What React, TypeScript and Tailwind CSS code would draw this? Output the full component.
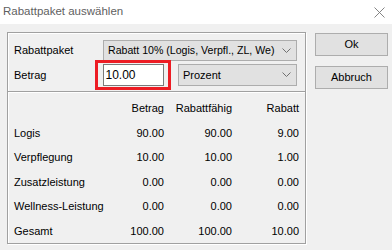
import React from "react";

const Chevron = () => (
  <svg width="9" height="6" viewBox="0 0 9 6" className="shrink-0">
    <polyline points="0.5,0.5 4.5,4.5 8.5,0.5" fill="none" stroke="#707070" strokeWidth="1" />
  </svg>
);

const rows = [
  ["Logis", "90.00", "90.00", "9.00"],
  ["Verpflegung", "10.00", "10.00", "1.00"],
  ["Zusatzleistung", "0.00", "0.00", "0.00"],
  ["Wellness-Leistung", "0.00", "0.00", "0.00"],
  ["Gesamt", "100.00", "100.00", "10.00"],
];

export default function App() {
  return (
    <div
      className="w-[392px] h-[250px] bg-[#f0f0f0] flex flex-col overflow-hidden text-black"
      style={{ fontFamily: '"Liberation Sans", Arial, sans-serif', fontSize: "11px" }}
    >
      {/* Title bar */}
      <div className="h-[24px] bg-white flex items-center justify-between pl-[3px] pr-[5px] shrink-0">
        <span className="text-[11.5px] text-[#5f5f5f] leading-none">Rabattpaket auswählen</span>
        <svg width="11" height="11" viewBox="0 0 11 11" className="mr-[2px]">
          <line x1="0.5" y1="0.5" x2="10.5" y2="10.5" stroke="#777" strokeWidth="0.9" />
          <line x1="10.5" y1="0.5" x2="0.5" y2="10.5" stroke="#777" strokeWidth="0.9" />
        </svg>
      </div>

      {/* Body */}
      <div className="flex pt-[8px]">
        {/* Group box */}
        <div className="ml-[7px] w-[299px] h-[212px] border border-[#a0a0a0] shadow-[inset_1px_1px_0_#fff,1px_1px_0_#fff] flex flex-col">
          {/* Row 1 */}
          <div className="flex items-center mt-[7px] h-[21px]">
            <span className="ml-[6px] w-[89px]">Rabattpaket</span>
            <div className="w-[194px] h-[21px] bg-[#e1e1e1] border border-[#adadad] flex items-center justify-between pl-[4px] pr-[5px]">
              <span className="whitespace-nowrap text-[10.6px]">Rabatt 10% (Logis, Verpfl., ZL, We)</span>
              <Chevron />
            </div>
          </div>
          {/* Row 2 */}
          <div className="flex items-center h-[30px] mt-[-1px]">
            <span className="ml-[6px] w-[81px]">Betrag</span>
            <div className="w-[76px] h-[30px] border-[3px] border-[#ed1c24] flex items-center justify-center">
              <div className="w-[61px] h-[22px] bg-white border border-[#7a7a7a] flex items-center pl-[2px] text-[12px]">
                10.00
              </div>
            </div>
            <div className="ml-[7px] w-[119px] h-[22px] bg-[#e1e1e1] border border-[#adadad] flex items-center justify-between pl-[4px] pr-[5px]">
              <span>Prozent</span>
              <Chevron />
            </div>
          </div>
          {/* Separator */}
          <div className="mt-[1px] h-[2px] border-t border-[#a0a0a0] bg-white shrink-0" />
          {/* Table */}
          <div className="grid grid-cols-[96px_54px_68px_67px] auto-rows-[24.5px] items-center ml-[6px] mt-[3px]">
            <span />
            <span className="text-right">Betrag</span>
            <span className="text-right">Rabattfähig</span>
            <span className="text-right">Rabatt</span>
            {rows.map((r) => (
              <React.Fragment key={r[0]}>
                <span className="whitespace-nowrap">{r[0]}</span>
                <span className="text-right">{r[1]}</span>
                <span className="text-right">{r[2]}</span>
                <span className="text-right">{r[3]}</span>
              </React.Fragment>
            ))}
          </div>
        </div>

        {/* Buttons */}
        <div className="ml-[9px] flex flex-col pt-[1px] gap-[10px]">
          <div className="w-[73px] h-[23px] bg-[#e1e1e1] border border-[#adadad] flex items-center justify-center">
            Ok
          </div>
          <div className="w-[73px] h-[23px] bg-[#e1e1e1] border border-[#adadad] flex items-center justify-center">
            Abbruch
          </div>
        </div>
      </div>
    </div>
  );
}
